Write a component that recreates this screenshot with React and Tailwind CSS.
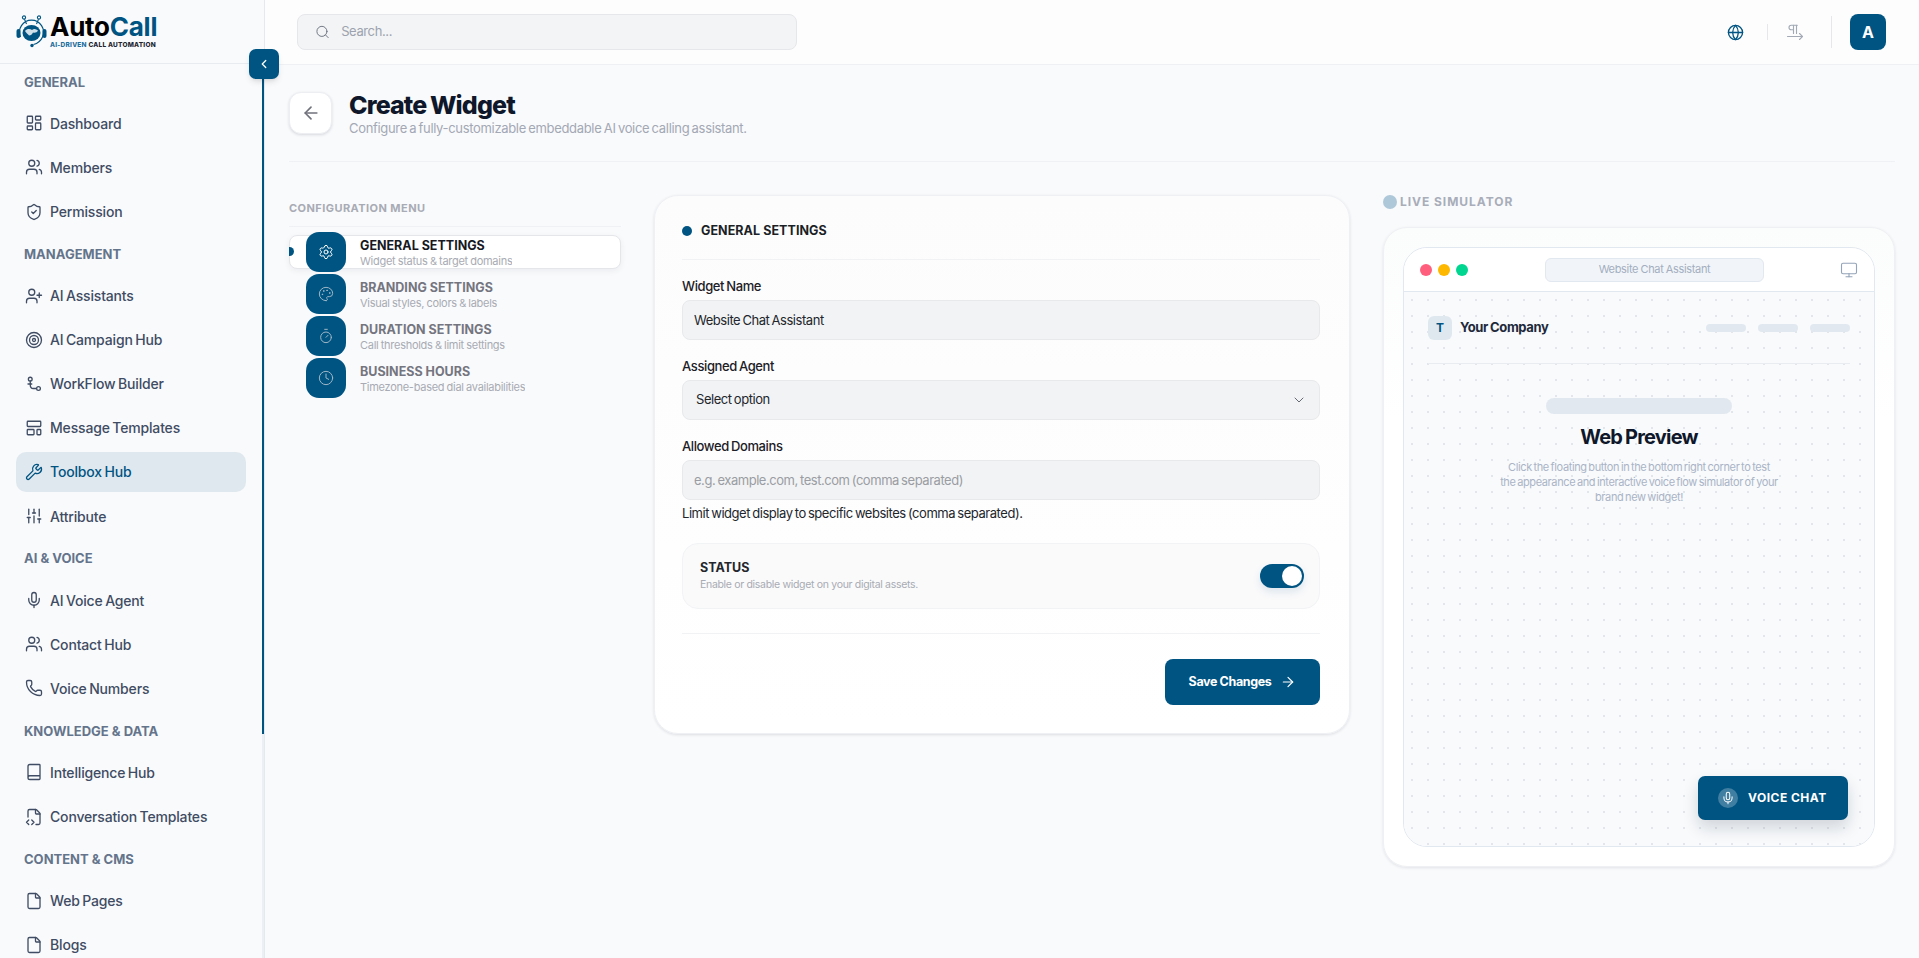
import {
  ArrowLeft, ArrowRight, Book, ChevronDown, ChevronLeft, Clock, File, FileCode2, Globe, LayoutDashboard,
  LayoutTemplate, Mic, Monitor, Palette, Phone, PilcrowRight, Search, Settings, ShieldCheck, SlidersVertical,
  Target, Timer, UserPlus, Users, Wrench,
} from 'lucide-react'

const BRAND = 'bg-[#005482]'

function FlowIcon({ size = 18, strokeWidth = 1.75 }) {
  return (
    <svg width={size} height={size} viewBox="0 0 24 24" fill="none" stroke="currentColor" strokeWidth={strokeWidth} strokeLinecap="round" strokeLinejoin="round">
      <circle cx="7" cy="5.5" r="2.5" />
      <path d="M7 8v5c0 3 1.5 5 4 5h4" />
      <path d="M4 12h5" />
      <circle cx="18" cy="18" r="2.5" />
    </svg>
  )
}

const navSections = [
  { title: 'GENERAL', items: [
    { label: 'Dashboard', icon: LayoutDashboard },
    { label: 'Members', icon: Users },
    { label: 'Permission', icon: ShieldCheck },
  ] },
  { title: 'MANAGEMENT', items: [
    { label: 'AI Assistants', icon: UserPlus },
    { label: 'AI Campaign Hub', icon: Target },
    { label: 'WorkFlow Builder', icon: FlowIcon },
    { label: 'Message Templates', icon: LayoutTemplate },
    { label: 'Toolbox Hub', icon: Wrench, active: true },
    { label: 'Attribute', icon: SlidersVertical },
  ] },
  { title: 'AI & VOICE', items: [
    { label: 'AI Voice Agent', icon: Mic },
    { label: 'Contact Hub', icon: Users },
    { label: 'Voice Numbers', icon: Phone },
  ] },
  { title: 'KNOWLEDGE & DATA', items: [
    { label: 'Intelligence Hub', icon: Book },
    { label: 'Conversation Templates', icon: FileCode2 },
  ] },
  { title: 'CONTENT & CMS', items: [
    { label: 'Web Pages', icon: File },
    { label: 'Blogs', icon: File },
  ] },
]

const configMenu = [
  { title: 'GENERAL SETTINGS', sub: 'Widget status & target domains', icon: Settings, active: true },
  { title: 'BRANDING SETTINGS', sub: 'Visual styles, colors & labels', icon: Palette },
  { title: 'DURATION SETTINGS', sub: 'Call thresholds & limit settings', icon: Timer },
  { title: 'BUSINESS HOURS', sub: 'Timezone-based dial availabilities', icon: Clock },
]

function Logo() {
  return (
    <div className="flex items-center gap-[3px]">
      <svg width="31" height="34" viewBox="0 0 31 34" fill="none">
        <circle cx="8" cy="2.5" r="1.6" stroke="#005482" strokeWidth="1.1" />
        <circle cx="23" cy="2.5" r="1.6" stroke="#005482" strokeWidth="1.1" />
        <path d="M8.5 4.2 10.5 9M22.500 4.200 20.500 9" stroke="#005482" strokeWidth="1.1" />
        <path d="M4.500 22a12 12 0 1 1 22 0c-1.500 3.500-5 6.500-9 7.500" stroke="#005482" strokeWidth="1.2" />
        <rect x="0.5" y="14" width="4" height="9" rx="2" fill="#005482" />
        <rect x="26.5" y="14" width="4" height="9" rx="2" fill="#005482" />
        <ellipse cx="15.5" cy="18" rx="9" ry="8" fill="#005482" />
        <path d="M9 16c2-2.500 5-2.500 7-1 2-1.500 4-1 6 .5-1 2-3 2.500-5 2-1 2-2 3-4 3-1-1.500-3-2.500-4-4.500Z" fill="#cfe0ea" />
        <circle cx="16" cy="30.500" r="1.700" fill="#005482" />
      </svg>
      <div className="flex flex-col">
        <div className="text-[26px] leading-[24px] font-bold tracking-[-0.01em] text-black">Auto<span className="text-[#005482]">Call</span></div>
        <div className="mt-[2px] whitespace-nowrap text-[6.5px] leading-[9px] font-extrabold tracking-[0.035em] text-[#1e2530]"><span className="text-[#1f6f9e]">AI-DRIVEN</span> CALL AUTOMATION</div>
      </div>
    </div>
  )
}

function Sidebar() {
  return (
    <aside className="relative z-10 flex h-full w-[265px] shrink-0 flex-col border-r border-[#e5e9ef] bg-[#f9fafc]">
      <div className="flex h-[64px] shrink-0 items-center border-b border-[#e8ebf0] pt-[1px] pl-[16px]">
        <Logo />
      </div>
      <nav className="mt-[-0.7px] min-h-0 flex-1 overflow-hidden px-[16px]">
        {navSections.map((section) => (
          <div key={section.title}>
            <div className="flex h-[40px] items-center pb-[2px] pl-[8px] text-[13px] font-bold text-[#64748b]">{section.title}</div>
            {section.items.map((item) => {
              const Icon = item.icon
              return (
                <div
                  key={item.label}
                  className={`mb-[4.1px] flex h-[40px] w-[230px] items-center gap-[7px] rounded-[10px] px-[9px] text-[14px] font-[450] tracking-[-0.012em] [word-spacing:-1px] ${item.active ? 'bg-[#e0e8ef] text-[#005482]' : 'text-[#3f4c63]'}`}
                >
                  <Icon size={18} strokeWidth={1.75} />
                  <span>{item.label}</span>
                </div>
              )
            })}
          </div>
        ))}
      </nav>
      {/* scrollbar + collapse button sit over the sidebar edge */}
      <div className="absolute top-[64px] right-0 bottom-0 w-[2px] bg-[#ecf0f5]">
        <div className={`h-[670px] w-full ${BRAND}`} />
      </div>
      <button className={`absolute top-[49px] left-[249px] flex h-[30px] w-[30px] items-center justify-center rounded-[7px] text-white shadow-md ${BRAND}`}>
        <ChevronLeft size={14} strokeWidth={2.25} />
      </button>
    </aside>
  )
}

function Topbar() {
  return (
    <header className="flex h-[65px] shrink-0 items-center justify-between border-b border-[#eef0f4] bg-[#fdfdfe] pr-[33px] pl-[32px]">
      <div className="flex h-[36px] w-[500px] items-center gap-[11px] rounded-[8px] border border-[#e6e7ea] bg-[#f3f4f5] pl-[17px]">
        <Search size={16} strokeWidth={1.5} className="text-[#6b7280]" />
        <input placeholder="Search..." className="w-full bg-transparent text-[13px] tracking-[-0.03em] outline-none placeholder:text-[#9ca3af]" />
      </div>
      <div className="flex items-center">
        <Globe size={17} strokeWidth={1.85} className="text-[#005482]" />
        <div className="mr-[18px] ml-[23px] h-[16px] w-px bg-[#e5e7eb]" />
        <PilcrowRight size={18} strokeWidth={1.5} className="text-[#a3aab5]" />
        <div className="mr-[18px] ml-[27px] h-[32px] w-px bg-[#e5e7eb]" />
        <div className={`flex h-[36px] w-[36px] items-center justify-center rounded-[8px] text-[16px] font-bold text-white ${BRAND}`}>A</div>
      </div>
    </header>
  )
}

function ConfigMenu() {
  return (
    <div>
      <div className="mt-[5px] border-b border-[#f0f1f4] pb-[10px] text-[11px] leading-[16px] font-bold tracking-[0.04em] text-[#a8abb4]">CONFIGURATION MENU</div>
      <div className="mt-[8px] flex flex-col gap-[8px]">
        {configMenu.map((m) => {
          const Icon = m.icon
          return (
            <div key={m.title} className={`relative flex h-[34px] items-center rounded-[8px] border pl-[16px] ${m.active ? 'border-[#e4e6ea] bg-white shadow-[0_2px_6px_rgba(15,23,42,0.06)]' : 'border-transparent'}`}>
              {m.active && <span className={`absolute top-[11px] left-[-1px] h-[9px] w-[5px] rounded-r-full ${BRAND}`} />}
              <div className={`flex h-[40px] w-[40px] shrink-0 items-center justify-center rounded-[13px] ${BRAND} ${m.active ? 'text-white' : 'text-[#9fb6c6]'}`}>
                <Icon size={16} strokeWidth={1.5} />
              </div>
              <div className="ml-[14px] h-[29px] overflow-hidden pt-[1px]">
                <div className={`text-[12.5px] leading-[14px] font-bold ${m.active ? 'text-[#16191f]' : 'text-[#74757f]'}`}>{m.title}</div>
                <div className="mt-[1px] text-[11px] leading-[15px] tracking-[-0.025em] [word-spacing:-0.5px] text-[#a8abb3]">{m.sub}</div>
              </div>
            </div>
          )
        })}
      </div>
    </div>
  )
}

function Field({ label, children }) {
  return (
    <div className="mb-[16px]">
      <div className="mb-[4px] text-[13px] leading-[20px] font-medium tracking-[-0.03em] [word-spacing:-1px] text-[#1c2026]">{label}</div>
      {children}
    </div>
  )
}

function FormCard() {
  const fieldCls = 'h-[40px] w-full rounded-[8px] border border-[#e8e9eb] bg-[#f2f3f4] px-[11px] text-[13px] tracking-[-0.035em] [word-spacing:-1px] text-[#22262c] outline-none'
  return (
    <div className="h-[539px] rounded-[24px] border border-[#eef0f3] bg-linear-to-b from-[#fcfcfd] to-white pr-[29px] pl-[27px] shadow-[0_1px_3px_rgba(15,23,42,0.12)]">
      <div className="flex h-[64px] items-center gap-[9px] border-b border-[#f1f2f4] pt-[13px] pb-[6px]">
        <span className={`h-[10px] w-[10px] rounded-full ${BRAND}`} />
        <span className="text-[12.5px] font-bold tracking-[0.005em] text-[#1b1f26]">GENERAL SETTINGS</span>
      </div>
      <div className="mt-[16px]">
        <Field label="Widget Name">
          <input readOnly value="Website Chat Assistant" className={fieldCls} />
        </Field>
        <Field label="Assigned Agent">
          <div className={`${fieldCls} flex items-center justify-between pr-[12px] pl-[13px]`}>
            <span>Select option</span>
            <ChevronDown size={16} strokeWidth={1.5} className="text-[#666b73]" />
          </div>
        </Field>
        <Field label="Allowed Domains">
          <input readOnly placeholder="e.g. example.com, test.com (comma separated)" className={`${fieldCls} placeholder:text-[#9a9da3]`} />
        </Field>
      </div>
      <div className="mt-[-13px] text-[13px] leading-[20px] tracking-[-0.035em] [word-spacing:-1px] text-[#22262c]">Limit widget display to specific websites (comma separated).</div>
      <div className="mt-[20px] flex h-[66px] items-center justify-between rounded-[16px] border border-[#f2f3f5] bg-[#fafafb] pr-[15px] pl-[17px]">
        <div>
          <div className="text-[12.5px] leading-[18px] font-bold text-[#23262c]">STATUS</div>
          <div className="text-[10.5px] leading-[16px] tracking-[-0.03em] text-[#a8abb3]">Enable or disable widget on your digital assets.</div>
        </div>
        <div className={`flex h-[24px] w-[44px] items-center justify-end rounded-full pr-[2px] shadow-[0_4px_8px_rgba(0,84,130,0.12)] ${BRAND}`}>
          <span className="h-[20px] w-[20px] rounded-full bg-white" />
        </div>
      </div>
      <div className="mt-[24px] flex justify-end border-t border-[#f1f2f4] pt-[25px]">
        <button className={`flex h-[46px] w-[155px] items-center justify-center gap-[9px] rounded-[8px] text-[12.5px] font-bold tracking-[-0.03em] text-white ${BRAND}`}>
          Save Changes
          <ArrowRight size={16} strokeWidth={1.75} />
        </button>
      </div>
    </div>
  )
}

function LiveSimulator() {
  return (
    <div>
      <div className="flex h-[14px] items-center gap-[3px] text-[12px] font-bold tracking-[0.08em] text-[#a8adb9]">
        <span className="h-[14px] w-[14px] rounded-full bg-[#aec8d9]" />
        LIVE SIMULATOR
      </div>
      <div className="mt-[18px] h-[640px] rounded-[24px] border border-[#eef0f3] bg-linear-to-b from-[#fbfcfc] to-white to-30% p-[19px] shadow-[0_1px_3px_rgba(15,23,42,0.1)]">
        <div className="flex h-[600px] flex-col overflow-hidden rounded-[24px] border border-[#e2e8f0]">
          <div className="flex h-[44px] shrink-0 items-center justify-between border-b border-[#e2e8f0] bg-white px-[16px]">
            <div className="flex w-[125px] gap-[6px]">
              <span className="h-[12px] w-[12px] rounded-full bg-[#ff5f7c]" />
              <span className="h-[12px] w-[12px] rounded-full bg-[#ffb800]" />
              <span className="h-[12px] w-[12px] rounded-full bg-[#00d68f]" />
            </div>
            <div className="flex h-[24px] w-[219px] items-center justify-center rounded-[6px] border border-[#e2e8f0] bg-[#f1f5f9] text-[11px] tracking-[-0.03em] [word-spacing:-0.5px] text-[#a3aec0]">Website Chat Assistant</div>
            <div className="flex w-[94px] justify-end">
              <Monitor size={18} strokeWidth={1.5} className="text-[#94a3b8]" />
            </div>
          </div>
          <div className="relative min-h-0 flex-1 bg-[#f8fafc] bg-[radial-gradient(circle,#e2e6ec_1px,transparent_1px)] bg-size-[16px_16px] px-[24px] pt-[24px]">
            <div className="flex h-[48px] items-start justify-between border-b border-[#e9edf2]">
              <div className="flex items-center gap-[8px]">
                <div className="flex h-[24px] w-[24px] items-center justify-center rounded-[6px] bg-[#e0e8ef] text-[12px] font-bold text-[#005482]">T</div>
                <span className="text-[13px] font-bold tracking-[-0.03em] [word-spacing:-0.5px] text-[#1e293b]">Your Company</span>
              </div>
              <div className="flex gap-[12px] pt-[8px]">
                <span className="h-[8px] w-[40px] rounded-full bg-[#e2e8f0]" />
                <span className="h-[8px] w-[40px] rounded-full bg-[#e2e8f0]" />
                <span className="h-[8px] w-[40px] rounded-full bg-[#e2e8f0]" />
              </div>
            </div>
            <div className="flex flex-col items-center pt-[34px]">
              <div className="h-[16px] w-[186px] rounded-full bg-[#e2e8f0]" />
              <div className="mt-[9px] text-[20px] leading-[28px] font-bold tracking-[-0.04em] [word-spacing:-1px] text-[#0f172a]">Web Preview</div>
              <p className="mt-[9px] whitespace-nowrap text-center text-[11px] leading-[15px] tracking-[-0.035em] [word-spacing:-1px] text-[#aab4c6]">
                Click the floating button in the bottom right corner to test<br />
                the appearance and interactive voice flow simulator of your<br />
                brand new widget!
              </p>
            </div>
            <button className={`absolute right-[26px] bottom-[26px] flex h-[44px] w-[150px] items-center gap-[10px] rounded-[7px] pl-[20px] text-[12px] font-bold tracking-[0.04em] text-white shadow-[0_8px_16px_rgba(15,23,42,0.16)] ${BRAND}`}>
              <span className="flex h-[20px] w-[20px] items-center justify-center rounded-full bg-white/25">
                <Mic size={14} strokeWidth={1.75} />
              </span>
              VOICE CHAT
            </button>
          </div>
        </div>
      </div>
    </div>
  )
}

export default function App() {
  return (
    <div className="flex h-[958px] w-full overflow-hidden bg-[#f9fafc] font-['Inter',sans-serif]">
      <Sidebar />
      <main className="flex min-w-0 flex-1 flex-col">
        <Topbar />
        <div className="px-[24px]">
          <div className="flex items-center gap-[17px] border-b border-[#f0f1f4] pt-[27px] pb-[27px]">
            <button className="flex h-[42px] w-[43px] items-center justify-center rounded-[12px] border border-[#eceef1] bg-white text-[#70727c] shadow-[0_1px_3px_rgba(15,23,42,0.14)]">
              <ArrowLeft size={20} strokeWidth={2} />
            </button>
            <div className="h-[42px]">
              <h1 className="text-[25px] leading-[26px] font-extrabold tracking-[-0.035em] [word-spacing:-1px] text-[#0f172a]">Create Widget</h1>
              <p className="mt-[2px] text-[13px] leading-[16px] tracking-[-0.025em] [word-spacing:-1px] text-[#a3a8b4]">Configure a fully-customizable embeddable AI voice calling assistant.</p>
            </div>
          </div>
          <div className="grid grid-cols-[332px_696px_512px] gap-x-[33px] pt-[33px]">
            <ConfigMenu />
            <FormCard />
            <LiveSimulator />
          </div>
        </div>
      </main>
    </div>
  )
}
